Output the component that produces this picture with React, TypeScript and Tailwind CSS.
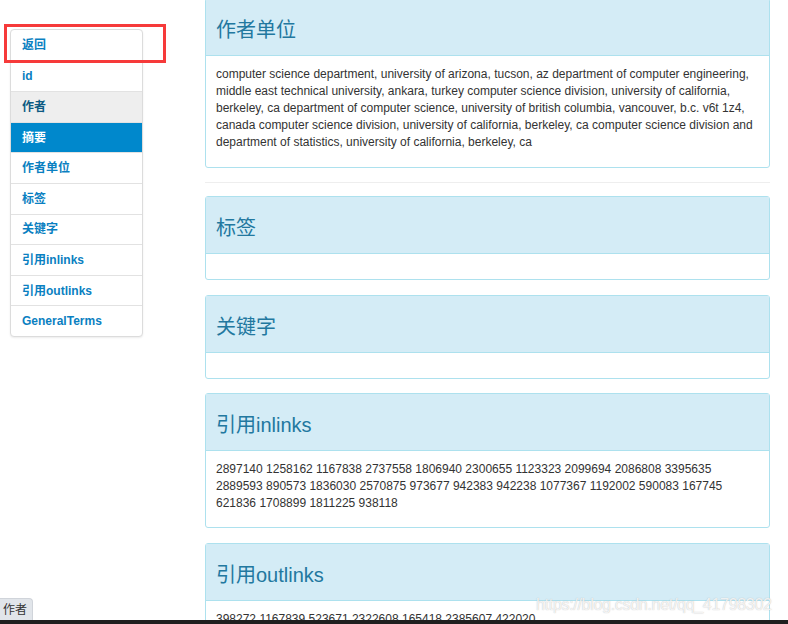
const navItems = [
  {label: "返回"},
  {label: "id"},
  {label: "作者", hover: true},
  {label: "摘要", active: true},
  {label: "作者单位"},
  {label: "标签"},
  {label: "关键字"},
  {label: "引用inlinks"},
  {label: "引用outlinks"},
  {label: "GeneralTerms"},
];

const affiliationLines = [
  "computer science department, university of arizona, tucson, az department of computer engineering,",
  "middle east technical university, ankara, turkey computer science division, university of california,",
  "berkeley, ca department of computer science, university of british columbia, vancouver, b.c. v6t 1z4,",
  "canada computer science division, university of california, berkeley, ca computer science division and",
  "department of statistics, university of california, berkeley, ca",
];

const inlinkLines = [
  "2897140 1258162 1167838 2737558 1806940 2300655 1123323 2099694 2086808 3395635",
  "2889593 890573 1836030 2570875 973677 942383 942238 1077367 1192002 590083 167745",
  "621836 1708899 1811225 938118",
];

const outlinkLines = ["398272 1167839 523671 2322608 165418 2385607 422020"];

interface PanelProps {
  title: string;
  lines?: string[];
  className?: string;
  bodyClassName?: string;
}

const Panel = ({title, lines = [], className = "", bodyClassName = "pb-[15px]"}: PanelProps) => (
  <div className={`rounded-[3px] border border-[#ade1ee] bg-white ${className}`}>
    <div className="flex h-[57px] items-center border-b border-[#ade1ee] bg-[#d4ecf6] px-[10px] pt-[6px]">
      <h3 className="text-[20px] font-normal leading-none text-[#22789f]">{title}</h3>
    </div>
    <div className={`px-[10px] pt-[10px] text-[12px] leading-[17px] text-[#333] ${bodyClassName}`}>
      {lines.map(line => (
        <div key={line} className="whitespace-nowrap">
          {line}
        </div>
      ))}
    </div>
  </div>
);

export default function App() {
  return (
    <div
      className="relative h-[624px] w-[788px] overflow-hidden bg-white"
      style={{fontFamily: '"Liberation Sans", "Noto Sans CJK SC", sans-serif'}}
    >
      <div className="flex items-start">
        {/* side nav */}
        <ul className="ml-[10px] mt-[29px] w-[133px] overflow-hidden rounded-[4px] border border-[#dcdcdc] bg-white shadow-[0_1px_2px_rgba(0,0,0,0.08)]">
          {navItems.map((item, index) => (
            <li
              key={item.label}
              className={`flex h-[30.6px] items-center px-[11px] text-[12px] font-bold ${
                index > 0 ? "border-t border-[#e2e2e2]" : ""
              } ${
                item.active
                  ? "bg-[#0088cc] text-white"
                  : item.hover
                    ? "bg-[#eeeeee] text-[#0d5a82]"
                    : "text-[#0a80c1]"
              }`}
            >
              {item.label}
            </li>
          ))}
        </ul>

        {/* main column */}
        <div className="ml-[62px] mt-[-2px] w-[565px]">
          <Panel title="作者单位" lines={affiliationLines} bodyClassName="pb-[16px]" />
          <hr className="mt-[14px] mb-[13px] border-0 border-t border-[#eeeeee]" />
          <Panel title="标签" className="mb-[15px]" />
          <Panel title="关键字" className="mb-[14px]" />
          <Panel title="引用inlinks" lines={inlinkLines} className="mb-[15px]" />
          <Panel title="引用outlinks" lines={outlinkLines} />
        </div>
      </div>

      {/* screenshot annotation */}
      <div className="absolute left-[4px] top-[24px] h-[39px] w-[162px] border-[3px] border-[#f63a3a]" />

      {/* watermark */}
      <div className="absolute left-[536px] top-[597px] whitespace-nowrap text-[16px] leading-none tracking-[-0.3px] text-white/80 [text-shadow:0_0_1px_rgba(150,150,150,0.7)]">
        https://blog.csdn.net/qq_41798302
      </div>

      {/* browser status bubble */}
      <div className="absolute bottom-[4px] left-0 flex h-[22px] w-[33px] items-center overflow-hidden rounded-tr-[4px] border-t border-r border-[#d0d4da] bg-[#e1e5ea] text-[12px] text-[#333]">
        <span className="ml-[3px] whitespace-nowrap">作者</span>
      </div>

      {/* bottom scrollbar edge */}
      <div className="absolute bottom-0 left-0 h-[4px] w-full bg-[#1f1f1f]" />
    </div>
  );
}
